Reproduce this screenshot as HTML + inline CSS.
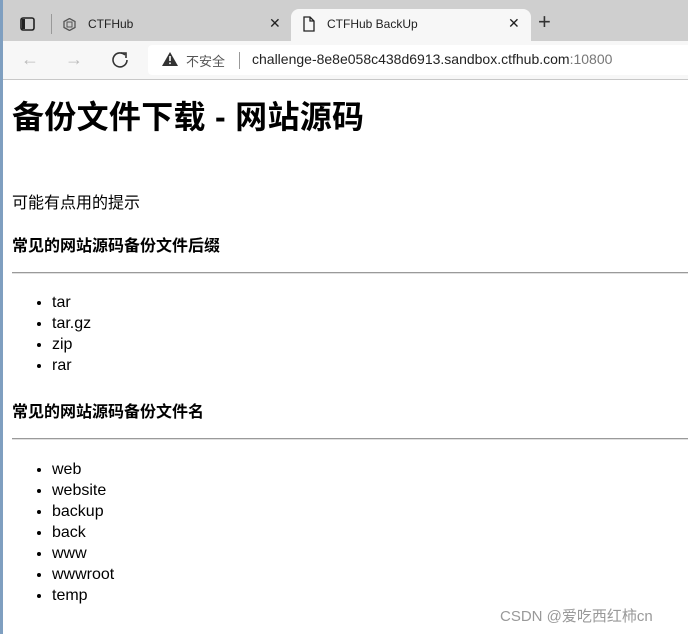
<!DOCTYPE html>
<html><head><meta charset="utf-8">
<style>
*{margin:0;padding:0;box-sizing:border-box}
body{width:688px;height:634px;overflow:hidden;background:#fff;position:relative;font-family:"Liberation Sans","Noto Sans CJK SC",sans-serif;color:#000}
.abs{position:absolute;white-space:nowrap}
#tabs{position:absolute;left:0;top:0;width:688px;height:41px;background:#cfcfcf}
#tool{position:absolute;left:0;top:41px;width:688px;height:39px;background:#f7f7f7;border-bottom:1px solid #c8c8c8}
#atab{position:absolute;left:291px;top:9px;width:240px;height:33px;background:#f7f7f7;border-radius:8px 8px 0 0}
#addr{position:absolute;left:148px;top:45px;width:545px;height:30px;background:#fff;border-radius:4px}
#strip{position:absolute;left:0;top:0;width:3px;height:634px;background:#7f9fc0}
.t{font-size:12px;color:#222}
ul{position:absolute;left:52px;font-size:16px;line-height:21px}
h4{position:absolute;left:12px;font-size:16px;font-weight:bold}
.hr{position:absolute;left:12px;width:676px;height:2px;border-top:1px solid #9a9a9a;border-bottom:1px solid #e0e0e0}
</style></head><body>
<div id="tabs"></div>
<div id="atab"></div>
<div id="tool"></div>
<div id="addr"></div>
<div id="strip"></div>
<svg class="abs" style="left:20px;top:17px" width="16" height="15"><rect x="1" y="1" width="13" height="12" rx="2" fill="none" stroke="#222" stroke-width="1.6"/><rect x="2" y="2" width="3" height="10" fill="#222"/></svg>
<div class="abs" style="left:51px;top:14px;width:1px;height:20px;background:#999"></div>
<svg class="abs" style="left:63px;top:18px" width="13" height="13"><polygon points="6.5,0.5 12,3.5 12,9.5 6.5,12.5 1,9.5 1,3.5" fill="none" stroke="#555" stroke-width="1.3"/><rect x="4" y="4" width="5" height="5" fill="none" stroke="#555"/></svg>
<div class="abs t" style="left:88px;top:17px">CTFHub</div>
<div class="abs" style="left:269px;top:15px;font-size:14px;color:#222">✕</div>
<svg class="abs" style="left:303px;top:16px" width="12" height="16"><path d="M1 1H7L11 5V15H1Z M7 1V5H11" fill="none" stroke="#222" stroke-width="1.3"/></svg>
<div class="abs t" style="left:327px;top:17px">CTFHub BackUp</div>
<div class="abs" style="left:508px;top:15px;font-size:14px;color:#222">✕</div>
<div class="abs" style="left:538px;top:9px;font-size:22px;color:#333;font-weight:300">+</div>
<div class="abs" style="left:21px;top:49px;font-size:18px;color:#bbb">←</div>
<div class="abs" style="left:65px;top:49px;font-size:18px;color:#bbb">→</div>
<svg class="abs" style="left:111px;top:51px" width="18" height="18"><path d="M14 4A7 7 0 1 0 16 9" fill="none" stroke="#333" stroke-width="1.6"/><path d="M10 2H15V7" fill="none" stroke="#333" stroke-width="1.6"/></svg>
<svg class="abs" style="left:162px;top:52px" width="16" height="14"><polygon points="8,0 16,14 0,14" fill="#333"/><rect x="7.2" y="4" width="1.6" height="5" fill="#fff"/><rect x="7.2" y="10.5" width="1.6" height="1.6" fill="#fff"/></svg>
<div class="abs" style="left:186px;top:51px;font-size:13px;color:#555">不安全</div>
<div class="abs" style="left:239px;top:52px;width:1px;height:17px;background:#999"></div>
<div class="abs" style="left:252px;top:51px;font-size:14px;color:#222">challenge-8e8e058c438d6913.sandbox.ctfhub.com<span style="color:#777">:10800</span></div>

<div class="abs" style="left:12px;top:92px;font-size:32px;font-weight:bold;letter-spacing:0.3px">备份文件下载 - 网站源码</div>
<div class="abs" style="left:12px;top:189px;font-size:16px">可能有点用的提示</div>
<h4 style="top:232px">常见的网站源码备份文件后缀</h4>
<div class="hr" style="top:272px"></div>
<ul style="top:292px"><li>tar</li><li>tar.gz</li><li>zip</li><li>rar</li></ul>
<h4 style="top:398px">常见的网站源码备份文件名</h4>
<div class="hr" style="top:438px"></div>
<ul style="top:459px"><li>web</li><li>website</li><li>backup</li><li>back</li><li>www</li><li>wwwroot</li><li>temp</li></ul>
<div class="abs" style="left:500px;top:605px;font-size:15px;color:#999">CSDN @爱吃西红柿cn</div>
</body></html>
